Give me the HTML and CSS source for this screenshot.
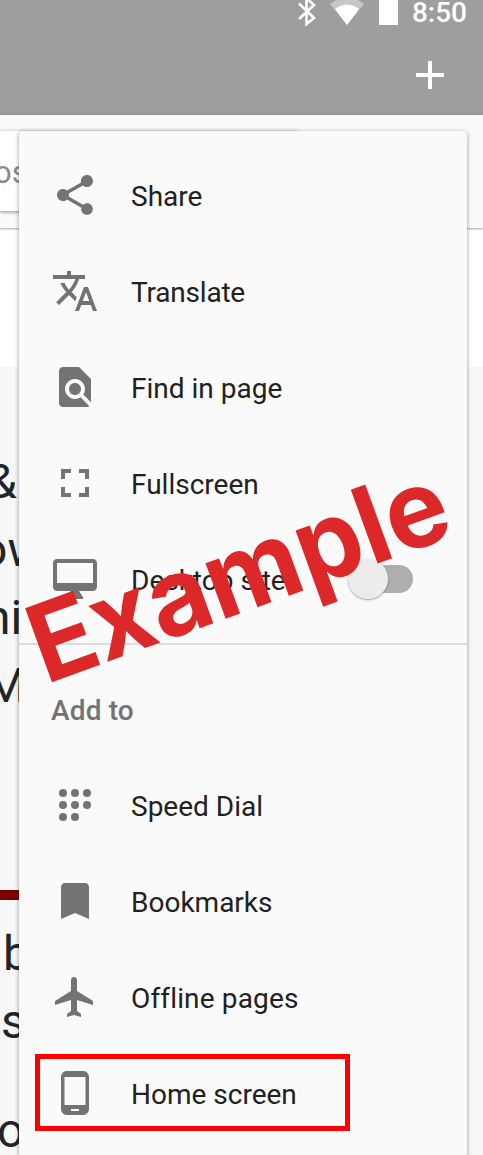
FILE: index.html
```
<!DOCTYPE html>
<html lang="en">
<head>
<meta charset="utf-8">
<title>Menu</title>
<link rel="stylesheet" href="styles.css">
</head>
<body>
<div class="screen">
  <header class="appbar">
    <div class="status">
      <svg class="bt" viewBox="0 0 20 30"><path d="M2 3.500 17 18 9.500 24V-2L17 5 2 19" fill="none" stroke="#fff" stroke-width="2.600"/></svg>
      <svg class="wifi" viewBox="0 0 34 26"><path d="M0 4Q17-9 34 4L17 25Z" fill="#c6c6c6"/><path d="M5 9Q17 0 29 9L17 25Z" fill="#fff"/></svg>
      <span class="battery"></span>
      <span class="clock">8:50</span>
    </div>
    <svg class="plus" viewBox="0 0 24 24"><path d="M19 13h-6v6h-2v-6H5v-2h6V5h2v6h6v2z"/></svg>
  </header>
  <div class="toolbar"><div class="search">os</div></div>
  <div class="blank"></div>
  <main class="page">
    <p class="t1">&amp;</p>
    <p class="t2">ow</p>
    <p class="t3">ni</p>
    <p class="t4">M</p>
    <div class="rule"></div>
    <p class="t5">b</p>
    <p class="t6">s</p>
    <p class="t7">o</p>
  </main>

  <nav class="menu">
    <div class="item"><svg viewBox="0 0 24 24"><path d="M18 16.080c-.76 0-1.440.3-1.960.77L8.910 12.700c.05-.23.09-.46.09-.7s-.04-.47-.09-.7l7.050-4.110c.54.5 1.250.81 2.040.81 1.660 0 3-1.340 3-3s-1.340-3-3-3-3 1.340-3 3c0 .24.04.47.09.7L8.040 9.810C7.500 9.310 6.790 9 6 9c-1.660 0-3 1.340-3 3s1.340 3 3 3c.79 0 1.500-.31 2.040-.81l7.120 4.160c-.05.21-.08.43-.08.65 0 1.610 1.310 2.920 2.920 2.920s2.920-1.310 2.920-2.920-1.310-2.920-2.920-2.920z"/></svg><span>Share</span></div>
    <div class="item"><svg viewBox="0 0 24 24"><path d="M12.870 15.070l-2.540-2.510.03-.03c1.740-1.940 2.980-4.170 3.710-6.530H17V4h-7V2H8v2H1v1.990h11.170C11.500 7.920 10.440 9.750 9 11.350 8.070 10.320 7.300 9.190 6.690 8h-2c.73 1.630 1.730 3.170 2.980 4.560l-5.090 5.020L4 19l5-5 3.110 3.110.76-2.040zM18.500 10h-2L12 22h2l1.120-3h4.750L21 22h2l-4.500-12zm-2.620 7l1.620-4.330L19.120 17h-3.240z"/></svg><span class="tight">Translate</span></div>
    <div class="item"><svg viewBox="0 0 24 24"><path d="M20 19.590V8l-6-6H6c-1.100 0-1.990.9-1.990 2L4 20c0 1.100.89 2 1.990 2H18c.45 0 .85-.15 1.190-.4l-4.430-4.430c-.8.52-1.740.83-2.760.83-2.760 0-5-2.240-5-5s2.240-5 5-5 5 2.240 5 5c0 1.020-.31 1.960-.83 2.750L20 19.590zM9 13c0 1.660 1.340 3 3 3s3-1.340 3-3-1.340-3-3-3-3 1.340-3 3z"/></svg><span>Find in page</span></div>
    <div class="item"><svg viewBox="0 0 24 24"><path d="M7 14H5v5h5v-2H7v-3zm-2-4h2V7h3V5H5v5zm12 7h-3v2h5v-5h-2v3zM14 5v2h3v3h2V5h-5z"/></svg><span>Fullscreen</span></div>
    <div class="item"><svg viewBox="0 0 24 24"><path d="M21 2H3c-1.100 0-2 .9-2 2v12c0 1.100.9 2 2 2h7l-2 3v1h8v-1l-2-3h7c1.100 0 2-.9 2-2V4c0-1.100-.9-2-2-2zm0 12H3V4h18v10z"/></svg><span>Desktop site</span><i class="switch"></i></div>
    <hr class="divider">
    <div class="heading">Add to</div>
    <div class="item"><svg viewBox="0 0 24 24"><circle cx="6" cy="6" r="2"/><circle cx="12" cy="6" r="2"/><circle cx="18" cy="6" r="2"/><circle cx="6" cy="12" r="2"/><circle cx="12" cy="12" r="2"/><circle cx="18" cy="12" r="2"/><circle cx="6" cy="18" r="2"/><circle cx="12" cy="18" r="2"/></svg><span>Speed Dial</span></div>
    <div class="item"><svg viewBox="0 0 24 24"><path d="M17 3H7c-1.100 0-1.990.9-1.990 2L5 21l7-3 7 3V5c0-1.100-.9-2-2-2z"/></svg><span>Bookmarks</span></div>
    <div class="item"><svg viewBox="0 0 24 24"><path d="M21 16v-2l-8-5V3.500c0-.83-.67-1.500-1.500-1.500S10 2.670 10 3.500V9l-8 5v2l8-2.500V19l-2 1.500V22l3.500-1 3.500 1v-1.500L13 19v-5.500l8 2.500z"/></svg><span class="loose">Offline pages</span></div>
    <div class="item"><svg viewBox="0 0 24 24"><path d="M16 1H8C6.340 1 5 2.340 5 4v16c0 1.660 1.340 3 3 3h8c1.660 0 3-1.340 3-3V4c0-1.660-1.340-3-3-3zm-2 20h-4v-1h4v1zm3.250-3H6.750V4h10.500v14z"/></svg><span>Home screen</span></div>
  </nav>
  <div class="highlight"></div>
  <svg class="stamp" viewBox="0 0 483 1155"><text transform="translate(52 682) rotate(-20)" x="-7" y="0" textLength="438" lengthAdjust="spacingAndGlyphs">Example</text></svg>
</div>
</body>
</html>
```
FILE: styles.css
```
* { box-sizing: border-box; }
body { margin: 0; font-family: Roboto, sans-serif; }
.screen { position: relative; width: 483px; height: 1155px; overflow: hidden; background: #f7f7f7; }

.appbar { height: 115px; background: #9e9e9e; border-bottom: 1px solid #949494; display: flex; flex-direction: column; align-items: flex-end; }
.status { height: 51px; padding-right: 16px; display: flex; align-items: flex-start; }
.bt { width: 20px; height: 30px; margin-right: 13px; overflow: visible; }
.wifi { width: 34px; height: 26px; margin-right: 15px; }
.battery { width: 19px; height: 25px; background: #fff; margin-right: 14px; }
.clock { color: #fff; font-size: 28px; font-weight: 500; line-height: 25px; }
.plus { width: 48px; height: 48px; margin-right: 29px; fill: #fff; flex: none; }

.toolbar { height: 113px; background: #fafafa; padding-top: 16px; box-shadow: 0 1px 2px rgba(0,0,0,.35); position: relative; }
.search { width: 298px; height: 80px; background: #fff; box-shadow: 0 1px 4px rgba(0,0,0,.45); color: #8a8a8a; font-size: 31px; line-height: 83px; text-indent: -6px; }
.blank { height: 139px; background: #fff; }

.page { height: 788px; color: #212529; font-size: 48px; }
.page p { margin: 0; height: 68px; line-height: 68px; width: 60px; white-space: nowrap; }
.page .t1 { margin-top: 81px; text-indent: -13px; }
.page .t2 { text-indent: -20px; }
.page .t3 { text-indent: -16px; }
.page .t4 { text-indent: -15px; }
.rule { height: 10px; width: 60px; margin: 170px 0 20px; background: #7b0000; }
.page .t5 { text-indent: 3px; }
.page .t6 { text-indent: 1px; }
.page .t7 { margin-top: 41px; text-indent: -3px; }

.menu { position: absolute; left: 19px; top: 131px; width: 448px; height: 1026px; padding-top: 16px; background: #fafafa; border-radius: 4px; box-shadow: 0 1px 4px rgba(0,0,0,.42); }
.item { height: 96px; padding: 0 54px 0 32px; display: flex; align-items: center; color: #212121; font-size: 28px; }
.item svg { width: 48px; height: 48px; margin-right: 32px; fill: #737373; flex: none; }
.item span { padding-top: 3px; white-space: nowrap; }
.item .tight { letter-spacing: -.2px; }
.item .loose { letter-spacing: .15px; font-variant-ligatures: common-ligatures; }
.switch { width: 52px; height: 28px; margin-left: auto; border-radius: 14px; background: #aeaeae; display: flex; align-items: center; }
.switch::before { content: ""; width: 40px; height: 40px; margin-left: -13px; border-radius: 50%; background: #ececec; box-shadow: 0 1px 2px rgba(0,0,0,.35); flex: none; }
.divider { height: 2px; margin: 16px 0; border: 0; background: #dcdcdc; }
.heading { height: 96px; padding: 3px 32px 0; line-height: 93px; color: #737373; font-size: 28px; font-weight: 500; letter-spacing: .15px; }

.highlight { position: absolute; left: 35px; top: 1054px; width: 315px; height: 77px; border: 5px solid #f00; }
.stamp { position: absolute; left: 0; top: 0; width: 483px; height: 1155px; }
.stamp text { font: 700 108px Inter, sans-serif; fill: #dc2828; }
```
